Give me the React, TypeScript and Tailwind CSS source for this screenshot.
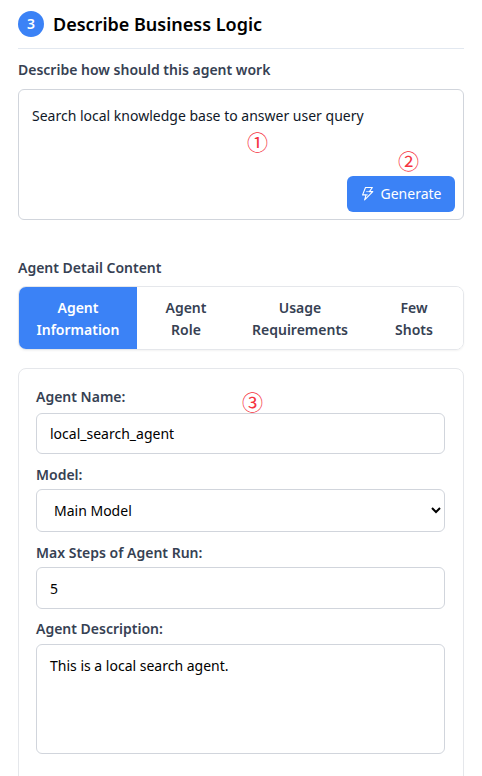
import { useState } from "react";

const tabs = ["Agent Information", "Agent Role", "Usage Requirements", "Few Shots"];

const labelClass = "block text-sm leading-5 font-semibold text-gray-700";
const fieldClass =
  "block w-full rounded-md border border-gray-300 bg-white px-[13px] text-sm text-black outline-none focus:border-blue-500";

function Marker({ children, className }: { children: string; className: string }) {
  return (
    <span
      aria-hidden="true"
      className={`pointer-events-none absolute font-['Noto_Sans_CJK_SC',sans-serif] text-[21px] leading-5 text-[#f5333f] ${className}`}
    >
      {children}
    </span>
  );
}

function BoltIcon() {
  return (
    <svg width="14" height="16" viewBox="0 0 14 16" fill="none" stroke="currentColor" strokeWidth="1.1" strokeLinejoin="round" aria-hidden="true">
      <path d="M4.5 1.5H11.4L8.4 5.6H11.8L3.6 13.8L5.1 8.9H1.6Z" />
      <path d="M5.2 5.6H8.4M5.1 8.9H7" strokeWidth="0.7" />
    </svg>
  );
}

export default function App() {
  const [active, setActive] = useState(0);
  return (
    <main className="flex h-screen flex-col overflow-hidden bg-white px-[18px] pt-[11px] font-['Noto_Sans','Segoe_UI',sans-serif]">
      <header className="flex shrink-0 items-center gap-[9px] border-b border-slate-200 pb-[11px]">
        <span className="flex size-[26px] items-center justify-center rounded-full bg-[#3b82f6] text-sm font-semibold text-white">3</span>
        <h1 className="text-lg leading-[26px] font-semibold text-black">Describe Business Logic</h1>
      </header>

      <section className="shrink-0 pt-[11px]">
        <label htmlFor="logic" className={labelClass}>Describe how should this agent work</label>
        <div className="relative mt-[9px]">
          <textarea
            id="logic"
            className="block h-[131px] w-full resize-none rounded-md border border-gray-300 px-[13px] py-[15px] text-sm leading-[22px] text-gray-900 outline-none focus:border-blue-500"
            defaultValue="Search local knowledge base to answer user query"
          />
          <button type="button" className="absolute right-[9px] bottom-2 flex h-9 w-[108px] items-center justify-center gap-[6px] rounded-md bg-[#3b82f6] text-sm text-white">
            <BoltIcon />
            Generate
          </button>
          <Marker className="top-[42px] left-[229px]">①</Marker>
          <Marker className="top-[61px] right-[45px]">②</Marker>
        </div>
      </section>

      <section className="shrink-0 pt-[38px]">
        <h2 className={labelClass}>Agent Detail Content</h2>
        <div role="tablist" className="mt-2 grid grid-cols-[118fr_98fr_130fr_98fr] overflow-hidden rounded-lg border border-gray-200 shadow-xs">
          {tabs.map((tab, i) => (
            <button
              key={tab}
              type="button"
              role="tab"
              aria-selected={active === i}
              onClick={() => setActive(i)}
              className={`px-4 pt-[10px] pb-2 text-sm leading-[22px] font-semibold ${active === i ? "bg-[#3b82f6] text-white" : "bg-white text-gray-700"}`}
            >
              {tab.split(" ").map((word) => (
                <span key={word} className="block">{word}</span>
              ))}
            </button>
          ))}
        </div>
      </section>

      <form className="mt-[18px] shrink-0 rounded-lg border border-gray-200 pr-[18px] pl-[17px] pt-[18px] pb-10">
        <div className="relative">
          <label htmlFor="name" className={labelClass}>Agent Name:</label>
          <Marker className="top-[4px] left-[206px]">③</Marker>
          <input id="name" className={`mt-[6px] h-[41px] ${fieldClass}`} defaultValue="local_search_agent" />
        </div>
        <div className="mt-[11px]">
          <label htmlFor="model" className={labelClass}>Model:</label>
          <select id="model" className={`mt-1 h-[43px] ${fieldClass}`}>
            <option>Main Model</option>
          </select>
        </div>
        <div className="mt-[11px]">
          <label htmlFor="steps" className={labelClass}>Max Steps of Agent Run:</label>
          <input id="steps" inputMode="numeric" className={`mt-1 h-[42px] ${fieldClass}`} defaultValue="5" />
        </div>
        <div className="mt-[10px]">
          <label htmlFor="description" className={labelClass}>Agent Description:</label>
          <textarea id="description" className={`mt-[5px] h-[110px] resize-none py-[10px] leading-[22px] ${fieldClass}`} defaultValue="This is a local search agent." />
        </div>
      </form>
    </main>
  );
}
